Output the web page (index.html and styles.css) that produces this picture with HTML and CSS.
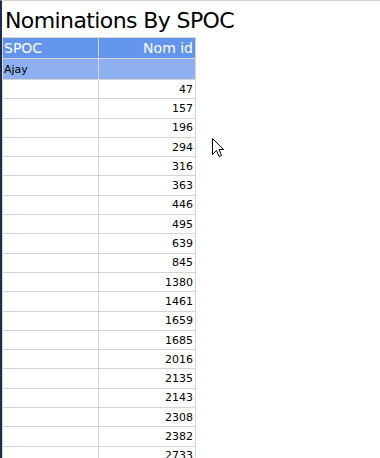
FILE: index.html
```html
<!DOCTYPE html>
<html>
<head>
<meta charset="utf-8">
<link rel="stylesheet" href="styles.css">
</head>
<body>
<div class="frame">
  <h1 class="title">Nominations By SPOC</h1>
  <table class="grid">
    <tr class="head"><td class="c1">SPOC</td><td class="c2">Nom id</td></tr>
    <tr class="group"><td class="c1">Ajay</td><td class="c2"></td></tr>
    <tr><td class="c1"></td><td class="c2">47</td></tr>
    <tr><td class="c1"></td><td class="c2">157</td></tr>
    <tr><td class="c1"></td><td class="c2">196</td></tr>
    <tr><td class="c1"></td><td class="c2">294</td></tr>
    <tr><td class="c1"></td><td class="c2">316</td></tr>
    <tr><td class="c1"></td><td class="c2">363</td></tr>
    <tr><td class="c1"></td><td class="c2">446</td></tr>
    <tr><td class="c1"></td><td class="c2">495</td></tr>
    <tr><td class="c1"></td><td class="c2">639</td></tr>
    <tr><td class="c1"></td><td class="c2">845</td></tr>
    <tr><td class="c1"></td><td class="c2">1380</td></tr>
    <tr><td class="c1"></td><td class="c2">1461</td></tr>
    <tr><td class="c1"></td><td class="c2">1659</td></tr>
    <tr><td class="c1"></td><td class="c2">1685</td></tr>
    <tr><td class="c1"></td><td class="c2">2016</td></tr>
    <tr><td class="c1"></td><td class="c2">2135</td></tr>
    <tr><td class="c1"></td><td class="c2">2143</td></tr>
    <tr><td class="c1"></td><td class="c2">2308</td></tr>
    <tr><td class="c1"></td><td class="c2">2382</td></tr>
    <tr><td class="c1"></td><td class="c2">2733</td></tr>
  </table>
  <svg class="cursor" width="12" height="20" viewBox="0 0 12 20">
    <path d="M0.5 0.5 L0.5 16.5 L4.5 12.5 L7 18.5 L9.5 17.5 L7 11.5 L11.5 11.5 Z" fill="#fff" stroke="#000" stroke-width="1"/>
  </svg>
</div>
</body>
</html>
```
FILE: styles.css
```css
html, body {
  margin: 0;
  padding: 0;
  background: #fff;
  overflow: hidden;
}
.frame {
  position: relative;
  width: 380px;
  height: 458px;
  border-left: 2px solid #1f2d4d;
  box-sizing: border-box;
  border-top: 1px solid #d4d0c8;
}
.title {
  margin: 0;
  padding: 6px 0 0 3px;
  height: 30px;
  font-family: "DejaVu Sans", Verdana, sans-serif;
  font-weight: normal;
  font-size: 22px;
  line-height: 27px;
  color: #000;
  letter-spacing: -0.6px;
}
.grid {
  border-collapse: collapse;
  font-family: "DejaVu Sans", Verdana, sans-serif;
  font-size: 11px;
}
.grid td {
  border: 1px solid #d4d4d4;
  height: 19.3px;
  padding: 0 2px 0 1px;
  box-sizing: border-box;
}
.grid .c1 { width: 96px; text-align: left; }
.grid .c2 { width: 97px; text-align: right; }
.grid .head td {
  background: #6495ed;
  color: #fff;
  font-size: 14px;
  height: 21px;
}
.grid .group td {
  background: #8fb0f0;
  color: #000;
  height: 21px;
}
.cursor {
  position: absolute;
  left: 210px;
  top: 137px;
}
```
